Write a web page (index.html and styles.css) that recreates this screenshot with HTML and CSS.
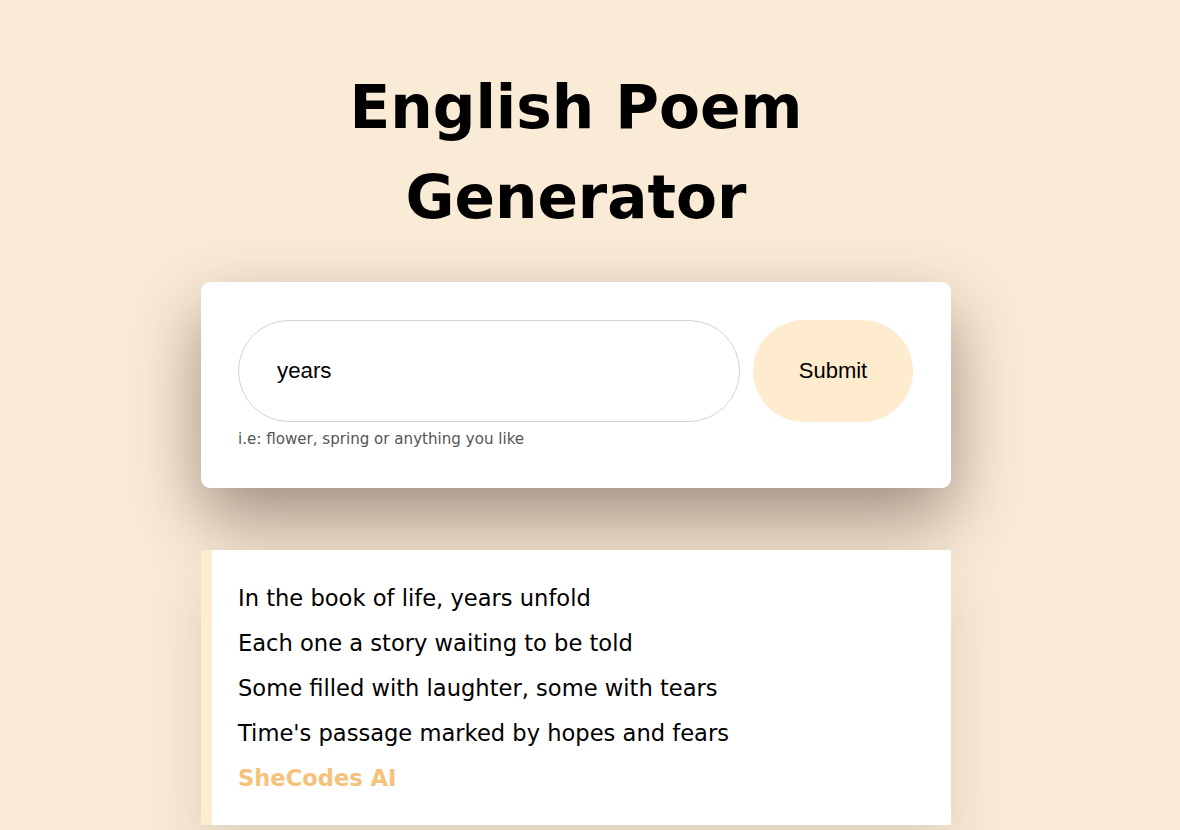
FILE: index.html
```html
<!DOCTYPE html>
<html lang="en">
<head>
<meta charset="utf-8">
<title>English Poem Generator</title>
<link rel="stylesheet" href="styles.css">
</head>
<body>
<div class="container">
  <h1 class="title">English Poem Generator</h1>
  <div class="form-card">
    <form class="form-row">
      <input class="word-input" type="text" value="years" placeholder="Enter a word">
      <button class="submit-btn" type="button">Submit</button>
    </form>
    <div class="hint">i.e: flower, spring or anything you like</div>
  </div>
  <div class="poem">
    <div class="line">In the book of life, years unfold</div>
    <div class="line">Each one a story waiting to be told</div>
    <div class="line">Some filled with laughter, some with tears</div>
    <div class="line">Time's passage marked by hopes and fears</div>
    <div class="line signature">SheCodes AI</div>
  </div>
</div>
</body>
</html>
```

FILE: styles.css
```css
html, body {
  margin: 0;
  padding: 0;
}
body {
  background: #faebd7;
  font-family: "DejaVu Sans", Verdana, sans-serif;
  color: #000;
  padding-right: 28px;
  height: 830px;
  overflow: hidden;
}
.container {
  width: 750px;
  margin: 0 auto;
  padding-top: 63px;
}
.title {
  margin: 0;
  font-size: 59.7px;
  line-height: 90px;
  font-weight: bold;
  text-align: center;
}
.form-card {
  margin-top: 39px;
  background: #fff;
  border-radius: 9px;
  padding: 38px 38px 40px 37px;
  box-shadow: 0 30px 70px rgba(50, 25, 20, 0.45);
}
.form-row {
  display: flex;
  gap: 13px;
  margin: 0;
}
.word-input {
  flex: 1;
  height: 102px;
  box-sizing: border-box;
  border: 1px solid #d3d3d3;
  border-radius: 51px;
  padding: 0 38px;
  font-family: "Liberation Sans", Arial, sans-serif;
  font-size: 22.3px;
  color: #000;
  outline: none;
  background: #fff;
}
.submit-btn {
  width: 160px;
  height: 102px;
  border: none;
  border-radius: 51px;
  background: #ffebcd;
  font-family: "Liberation Sans", Arial, sans-serif;
  font-size: 22px;
  color: #000;
}
.hint {
  margin-top: 8px;
  font-size: 15.1px;
  color: #555;
}
.poem {
  margin-top: 62px;
  background: #fff;
  border-left: 11px solid #ffebcd;
  padding: 26px 20px 24px 26px;
  font-size: 22.6px;
  line-height: 45px;
  box-shadow: 0 30px 60px rgba(60, 35, 30, 0.14);
}
.signature {
  color: #f5c27b;
  font-weight: bold;
}
```
